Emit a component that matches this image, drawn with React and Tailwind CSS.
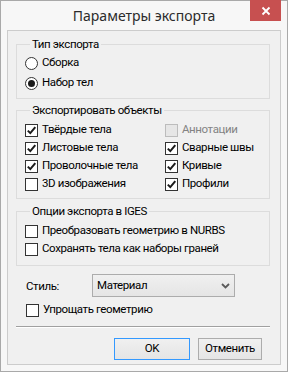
import React from 'react';

const Tick = () => (
  <svg width="11" height="11" viewBox="0 0 11 11">
    <path d="M1.8 5.6 L4.3 8.1 L9.3 2.2" fill="none" stroke="#1a1a1a" strokeWidth="2" />
  </svg>
);

// checkbox row
const Check = ({ label, checked, disabled }) => (
  <div className="flex items-center h-[18px] gap-[4px]">
    <span
      className={
        'w-[13px] h-[13px] border flex items-center justify-center ' +
        (disabled ? 'border-[#bcbcbc] bg-[#e6e6e6]' : 'border-[#333333] bg-white')
      }
    >
      {checked && <Tick />}
    </span>
    <span className={disabled ? 'text-[#838383]' : 'text-black'}>{label}</span>
  </div>
);

const Radio = ({ label, checked }) => (
  <div className="flex items-center h-[20px] gap-[4px]">
    <span className="w-[13px] h-[13px] rounded-full border border-[#333333] bg-white flex items-center justify-center">
      {checked && <span className="w-[7px] h-[7px] rounded-full bg-[#1a1a1a]" />}
    </span>
    <span>{label}</span>
  </div>
);

const Group = ({ title, className, children }) => (
  <fieldset className={'border border-[#dcdcdc] ' + className}>
    <legend className="ml-[5px] px-[2px] leading-[15px]">{title}</legend>
    {children}
  </fieldset>
);

export default function App() {
  return (
    <div className="w-[288px] h-[372px] flex flex-col border border-[#a9a9a9] bg-[#f7f7f7] text-[11.5px] tracking-[-0.4px] text-black font-['Roboto',sans-serif]">
      {/* title bar */}
      <div className="h-[29px] grid grid-cols-[1fr_auto_1fr]">
        <div />
        <div className="text-[14px] tracking-normal text-[#2b2b2b] leading-[29px] font-['Noto_Sans',sans-serif]">Параметры экспорта</div>
        <div className="flex justify-end items-start pr-[6px] -mt-[1px]">
          <div className="w-[31px] h-[21px] bg-[#c75050] flex items-center justify-center">
            <svg width="10" height="10" viewBox="0 0 10 10">
              <path d="M1.5 1.5 L8.5 8.5 M8.5 1.5 L1.5 8.5" stroke="white" strokeWidth="1.8" />
            </svg>
          </div>
        </div>
      </div>

      {/* client area */}
      <div className="flex-1 mx-[6px] mb-[6px] border border-[#cccccc] bg-[#f0f0f0] pl-[8px] pr-[10px] pt-[6px] flex flex-col">
        <Group title="Тип экспорта" className="pl-[8px] pt-[1px] pb-[5px]">
          <Radio label="Сборка" />
          <Radio label="Набор тел" checked />
        </Group>

        <Group title="Экспортировать объекты" className="mt-[4px] pl-[8px] pt-[3px] pb-[5px]">
          <div className="grid grid-cols-[140px_1fr]">
            <div className="flex flex-col">
              <Check label="Твёрдые тела" checked />
              <Check label="Листовые тела" checked />
              <Check label="Проволочные тела" checked />
              <Check label="3D изображения" />
            </div>
            <div className="flex flex-col">
              <Check label="Аннотации" disabled />
              <Check label="Сварные швы" checked />
              <Check label="Кривые" checked />
              <Check label="Профили" checked />
            </div>
          </div>
        </Group>

        <Group title="Опции экспорта в IGES" className="mt-[5px] pl-[8px] pt-[3px] pb-[7px]">
          <Check label="Преобразовать геометрию в NURBS" />
          <Check label="Сохранять тела как наборы граней" />
        </Group>

        <div className="mt-[8px] flex items-center pl-[10px]">
          <span className="w-[66px] pt-[2px]">Стиль:</span>
          <div className="w-[143px] h-[23px] border border-[#acacac] bg-linear-to-b from-[#f0f0f0] to-[#e5e5e5] flex items-center justify-between pl-[4px] pr-[4px]">
            <span>Материал</span>
            <svg width="9" height="6" viewBox="0 0 9 6">
              <path d="M1 1 L4.5 4.5 L8 1" fill="none" stroke="#5a5a5a" strokeWidth="1.8" />
            </svg>
          </div>
        </div>

        <div className="mt-[4px] pl-[10px]">
          <Check label="Упрощать геометрию" />
        </div>

        <div className="mt-[7px] border-t border-t-[#a0a0a0] border-b border-b-white" />

        <div className="mt-[10px] flex justify-end gap-[8px] pr-[8px]">
          <button className="w-[76px] h-[22px] border border-[#3399ff] bg-linear-to-b from-[#f0f0f0] to-[#e5e5e5]">
            OK
          </button>
          <button className="w-[64px] h-[22px] border border-[#acacac] bg-linear-to-b from-[#f0f0f0] to-[#e5e5e5]">
            Отменить
          </button>
        </div>
      </div>
    </div>
  );
}
